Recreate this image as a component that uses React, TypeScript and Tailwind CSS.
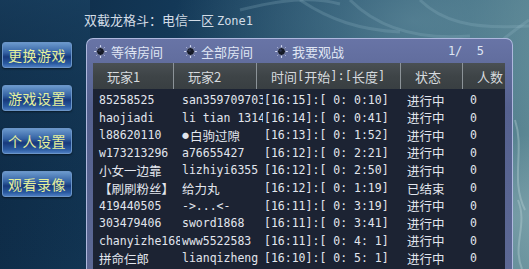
import React from "react";

const rows: string[][] = [
  ["85258525", "san359709703", "[16:15]:[ 0: 0:10]", "进行中", "0"],
  ["haojiadi", "li tian 1314", "[16:14]:[ 0: 0:41]", "进行中", "0"],
  ["l88620110", "●白驹过隙", "[16:13]:[ 0: 1:52]", "进行中", "0"],
  ["w173213296", "a76655427", "[16:12]:[ 0: 2:21]", "进行中", "0"],
  ["小女一边靠", "lizhiyi6355", "[16:12]:[ 0: 2:50]", "进行中", "0"],
  ["【刷刷粉丝】", "给力丸", "[16:12]:[ 0: 1:19]", "已结束", "0"],
  ["419440505", "->...<-", "[16:11]:[ 0: 3:19]", "进行中", "0"],
  ["303479406", "sword1868", "[16:11]:[ 0: 3:41]", "进行中", "0"],
  ["chanyizhe168", "www5522583", "[16:11]:[ 0: 4: 1]", "进行中", "0"],
  ["拼命仨郎", "lianqizheng", "[16:10]:[ 0: 5: 1]", "进行中", "0"],
];

const bodyCols = [
  "w-[87px] pl-[6px]",
  "w-[83px] pl-[2px]",
  "w-[139px] pl-[1px]",
  "w-[63px] pl-[5px]",
  "w-[40px] pl-[5px]",
];

const isCjk = (s: string) => /[\u3000-\u9fff\uff00-\uffef]/.test(s);

function Radio() {
  return (
    <svg width="13" height="13" viewBox="0 0 13 13" className="shrink-0">
      <g stroke="#cfd6ee" strokeWidth="1.2" strokeLinecap="round">
        <path d="M6.5 0.6 V2.4 M6.5 10.6 V12.4 M0.6 6.5 H2.4 M10.6 6.5 H12.4" />
        <path d="M2.3 2.3 L3.2 3.2 M10.7 2.3 L9.8 3.2 M2.3 10.7 L3.2 9.8 M10.7 10.7 L9.8 9.8" strokeWidth="0.9" stroke="#aeb6d6" />
      </g>
      <circle cx="6.5" cy="6.5" r="4" fill="#141926" stroke="#8790b8" strokeWidth="0.9" />
      <circle cx="5.5" cy="5.5" r="1.2" fill="#2c3450" />
    </svg>
  );
}

function Backdrop() {
  return (
    <svg className="absolute inset-0" width="529" height="269" viewBox="0 0 529 269">
      <defs>
        <radialGradient id="g1" cx="0.78" cy="0.08" r="0.45">
          <stop offset="0" stopColor="#7aa2b0" stopOpacity="0.45" />
          <stop offset="1" stopColor="#7aa2b0" stopOpacity="0" />
        </radialGradient>
        <radialGradient id="g2" cx="1" cy="0.8" r="0.3">
          <stop offset="0" stopColor="#8fb0b8" stopOpacity="0.5" />
          <stop offset="1" stopColor="#8fb0b8" stopOpacity="0" />
        </radialGradient>
        <linearGradient id="g3" x1="0" y1="0" x2="0" y2="1">
          <stop offset="0" stopColor="#1f4a6c" stopOpacity="0.5" />
          <stop offset="1" stopColor="#0b2540" stopOpacity="0" />
        </linearGradient>
      </defs>
      <rect width="529" height="269" fill="url(#g1)" />
      <rect width="529" height="269" fill="url(#g2)" />
      <rect width="90" height="269" fill="url(#g3)" />
      <g fill="none" stroke="#9cc0cc" strokeOpacity="0.22" strokeWidth="3">
        <path d="M300 0 C330 20 360 30 400 32" />
        <path d="M350 0 C380 30 420 40 470 36" />
        <path d="M420 0 C440 20 470 30 529 26" />
        <path d="M240 10 C280 0 310 -4 340 4" />
        <path d="M480 60 C500 40 515 30 529 20" />
      </g>
      <g fill="none" stroke="#c4dade" strokeOpacity="0.35" strokeWidth="2">
        <path d="M515 120 C525 150 510 180 525 210" />
        <path d="M518 200 C528 225 512 245 522 269" />
      </g>
    </svg>
  );
}

function Cell({ text, cls }: { text: string; cls: string }) {
  const base = `${cls} h-full flex items-center overflow-hidden whitespace-pre text-[#e2e6ee] leading-none`;
  if (text.startsWith("●")) {
    return (
      <div className={`${base} font-['Noto_Sans_CJK_SC',sans-serif] text-[12.5px]`}>
        <span className="text-[7px] mr-[1px]">●</span>
        {text.slice(1)}
      </div>
    );
  }
  return (
    <div
      className={`${base} ${isCjk(text) ? "font-['Noto_Sans_CJK_SC',sans-serif] text-[12.5px]" : "font-['DejaVu_Sans_Mono','Noto_Sans_CJK_SC',monospace] text-[11.5px]"}`}
    >
      {text}
    </div>
  );
}

const M = ({ children }: { children: React.ReactNode }) => (
  <span className="font-['DejaVu_Sans_Mono',monospace] text-[12px]">{children}</span>
);

export default function App() {
  const head: [React.ReactNode, string][] = [
    ["玩家1", "w-[81px]"],
    ["玩家2", "w-[83px]"],
    [
      <>
        时间<M>[</M>开始<M>]:[</M>长度<M>]</M>
      </>,
      "w-[144px]",
    ],
    ["状态", "w-[62px]"],
    ["人数", "w-[42px]"],
  ];
  return (
    <div className="relative w-[529px] h-[269px] overflow-hidden bg-[linear-gradient(100deg,#0d2944_0%,#133857_30%,#23506c_60%,#3e6c80_82%,#66909a_100%)] font-['Noto_Sans_CJK_SC',sans-serif]">
      <Backdrop />
      <div className="relative flex h-full">
        <div className="w-[84px] shrink-0 pl-[2px] pt-[42px] flex flex-col gap-[17px]">
          {["更换游戏", "游戏设置", "个人设置", "观看录像"].map((t) => (
            <div
              key={t}
              className="w-[70px] h-[26px] rounded-[3px] border border-[#6b95c8] bg-[linear-gradient(to_bottom,#6a98cc_0%,#3563a4_40%,#173a7c_58%,#2a5aa0_85%,#4c7cc0_100%)] flex items-center justify-center text-[14px] leading-none text-[#e6f09c] tracking-[0.5px] shadow-[0_1px_2px_rgba(0,0,0,0.5)]"
            >
              {t}
            </div>
          ))}
        </div>
        <div className="flex flex-col flex-1 min-w-0">
          <div className="h-[38px] pt-[11px] text-[13px] leading-[18px] text-[#d2dce6] whitespace-pre">
            双截龙格斗：电信一区 <span className="font-['DejaVu_Sans_Mono',monospace] text-[12px]">Zone1</span>
          </div>
          <div className="ml-[2px] w-[427px] flex-1 rounded-t-[7px] border border-b-0 border-[#aeb8de] bg-[linear-gradient(to_bottom,#6874a6_0%,#55618f_30%,#5c6894_100%)] flex flex-col">
            <div className="h-[24px] shrink-0 flex items-center pl-[7px] pr-[28px] text-[13px] leading-none text-[#dfe5f3]">
              <div className="flex items-center gap-[4px] w-[90px]">
                <Radio />
                <span>等待房间</span>
              </div>
              <div className="flex items-center gap-[4px] w-[91px]">
                <Radio />
                <span>全部房间</span>
              </div>
              <div className="flex items-center gap-[4px]">
                <Radio />
                <span>我要观战</span>
              </div>
              <div className="ml-auto font-['DejaVu_Sans_Mono',monospace] text-[12px] text-[#dfe5f3] whitespace-pre">1/  5</div>
            </div>
            <div className="flex-1 ml-[6px] mr-[7px] bg-[#1c2333] flex flex-col">
              <div className="h-[26px] shrink-0 flex bg-[#3d4346]">
                {head.map(([t, w], i) => (
                  <div
                    key={i}
                    className={`${w} h-full flex items-center pl-[14px] text-[13px] leading-none text-[#d6dade] bg-[linear-gradient(to_bottom,#4a5054_0%,#3e4447_50%,#393f42_100%)] whitespace-nowrap overflow-hidden ${i < 4 ? "border-r border-[#8c9398]" : ""}`}
                  >
                    {t}
                  </div>
                ))}
              </div>
              <div className="pt-[3px] flex flex-col">
                {rows.map((r, ri) => (
                  <div key={ri} className="h-[17.6px] flex">
                    {r.map((c, ci) => (
                      <Cell key={ci} text={c} cls={bodyCols[ci]} />
                    ))}
                  </div>
                ))}
              </div>
            </div>
          </div>
        </div>
      </div>
    </div>
  );
}
